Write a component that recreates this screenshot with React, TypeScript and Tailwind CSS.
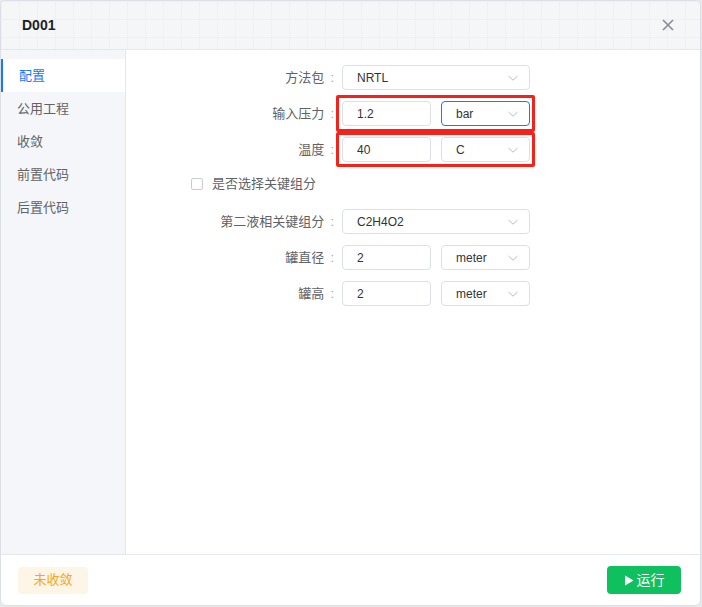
import React from "react";

const font = { fontFamily: '"Liberation Sans", "Noto Sans CJK SC", sans-serif' };

function Chevron() {
  return (
    <svg width="12" height="12" viewBox="0 0 12 12" className="shrink-0">
      <path d="M1.5 4 L6 8.2 L10.5 4" fill="none" stroke="#b8bcc4" strokeWidth="1" />
    </svg>
  );
}

function Select({ value, w, active }: { value: string; w: string; active?: boolean }) {
  return (
    <div
      className={`${w} h-[25px] rounded-[4px] border ${
        active ? "border-[#1677ff]" : "border-[#dcdfe6]"
      } bg-white flex items-center justify-between pl-[14px] pr-[10px] text-[12px] text-[#333]`}
    >
      <span>{value}</span>
      <Chevron />
    </div>
  );
}

function Input({ value }: { value: string }) {
  return (
    <div className="w-[89px] h-[25px] rounded-[4px] border border-[#dcdfe6] bg-white flex items-center pl-[14px] text-[12px] text-[#333]">
      {value}
    </div>
  );
}

function Label({ text }: { text: string }) {
  return (
    <div className="w-[216px] shrink-0 flex justify-end items-center text-[13px] text-[#606266] pr-[8px]">
      <span>{text}</span>
      <span className="ml-[6px] text-[#a0a4ab]">:</span>
    </div>
  );
}

export default function App() {
  const menu = ["配置", "公用工程", "收敛", "前置代码", "后置代码"];
  return (
    <div className="w-[702px] h-[607px] bg-[#e9e9eb]" style={font}>
      <div className="w-[701px] h-[606px] bg-white rounded-[6px] border border-[#dcdfe6] flex flex-col overflow-hidden">
        {/* header */}
        <div className="h-[49px] shrink-0 flex items-center justify-between pl-[21px] pr-[26px] border-b border-[#e4e7ed] bg-[#f5f6f8] bg-[linear-gradient(to_right,#eff0f3_1px,transparent_1px),linear-gradient(to_bottom,#eff0f3_1px,transparent_1px)] bg-[size:18px_18px]">
          <span className="text-[14px] font-bold text-[#1f1f1f]">D001</span>
          <svg width="12" height="12" viewBox="0 0 12 12">
            <path d="M1 1 L11 11 M11 1 L1 11" stroke="#8a8d93" strokeWidth="1.7" />
          </svg>
        </div>
        {/* body */}
        <div className="flex flex-1 min-h-0">
          <div className="w-[125px] shrink-0 bg-[#f5f6fa] border-r border-[#e4e7ed] pt-[9px]">
            {menu.map((m, i) => (
              <div
                key={m}
                className={`h-[33px] flex items-center pl-[16px] text-[13px] ${
                  i === 0
                    ? "bg-white text-[#1677ff] border-l-2 border-[#1677ff] pl-[14px]"
                    : "text-[#606266]"
                }`}
              >
                {m}
              </div>
            ))}
          </div>
          <div className="flex-1 pt-[15px] flex flex-col">
            <div className="flex items-center h-[25px]">
              <Label text="方法包" />
              <Select value="NRTL" w="w-[188px]" />
            </div>
            <div className="flex items-center h-[25px] mt-[11px]">
              <Label text="输入压力" />
              <div className="relative flex gap-[10px]">
                <div className="absolute -left-[6px] -right-[5px] -top-[6px] -bottom-[6px] border-[3px] border-[#f5221b] rounded-[2px]" />
                <Input value="1.2" />
                <Select value="bar" w="w-[89px]" active />
              </div>
            </div>
            <div className="flex items-center h-[25px] mt-[11px]">
              <Label text="温度" />
              <div className="relative flex gap-[10px]">
                <div className="absolute -left-[6px] -right-[5px] -top-[5px] -bottom-[5px] border-[3px] border-[#f5221b] rounded-[2px]" />
                <Input value="40" />
                <Select value="C" w="w-[89px]" />
              </div>
            </div>
            <div className="flex items-center h-[14px] mt-[15px] pl-[65px]">
              <div className="w-[12px] h-[12px] rounded-[2px] border border-[#c8ccd3] bg-white" />
              <span className="ml-[9px] text-[13px] text-[#606266]">是否选择关键组分</span>
            </div>
            <div className="flex items-center h-[25px] mt-[18px]">
              <Label text="第二液相关键组分" />
              <Select value="C2H4O2" w="w-[188px]" />
            </div>
            <div className="flex items-center h-[25px] mt-[11px]">
              <Label text="罐直径" />
              <div className="flex gap-[10px]">
                <Input value="2" />
                <Select value="meter" w="w-[89px]" />
              </div>
            </div>
            <div className="flex items-center h-[25px] mt-[11px]">
              <Label text="罐高" />
              <div className="flex gap-[10px]">
                <Input value="2" />
                <Select value="meter" w="w-[89px]" />
              </div>
            </div>
          </div>
        </div>
        {/* footer */}
        <div className="h-[51px] shrink-0 border-t border-[#e4e7ed] flex items-center justify-between pl-[17px] pr-[19px]">
          <div className="w-[70px] h-[27px] rounded-[4px] bg-[#fdf5e6] text-[#f5a623] text-[13px] flex items-center justify-center">
            未收敛
          </div>
          <div className="w-[74px] h-[28px] rounded-[4px] bg-[#0fc15e] text-white text-[14px] flex items-center justify-center gap-[3px]">
            <svg width="10" height="11" viewBox="0 0 10 11">
              <path d="M1 0.5 L9.5 5.5 L1 10.5 Z" fill="white" />
            </svg>
            <span>运行</span>
          </div>
        </div>
      </div>
    </div>
  );
}
